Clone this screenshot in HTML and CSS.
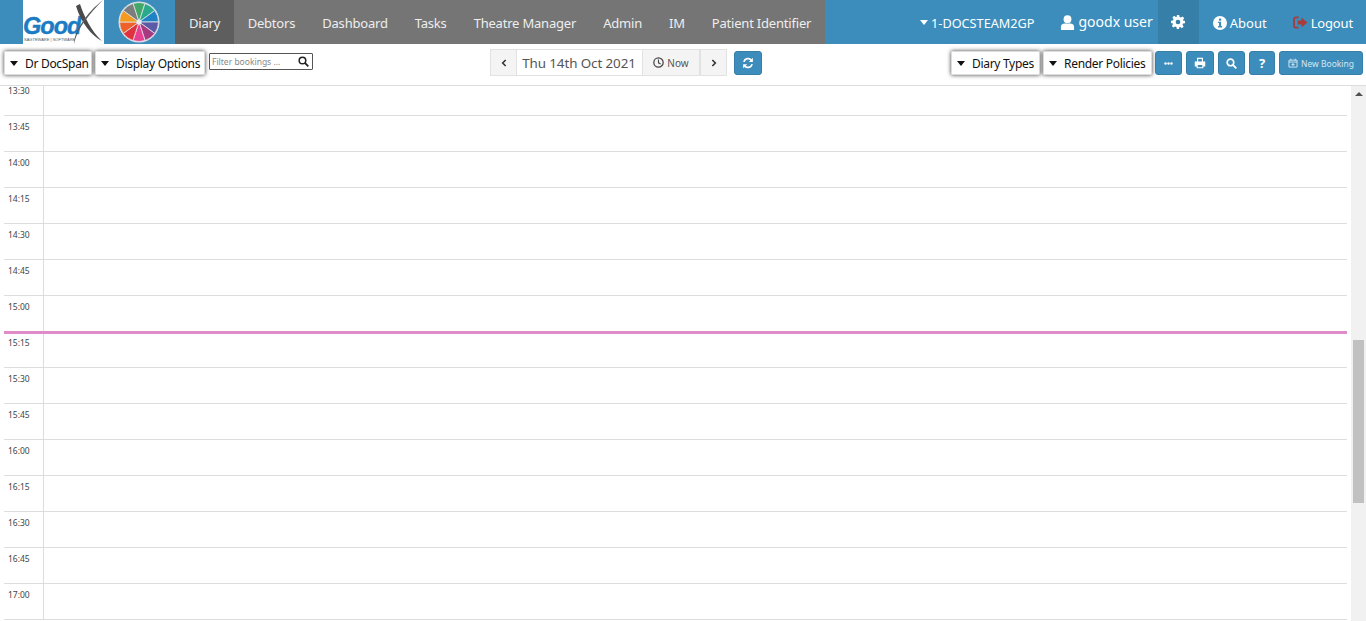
FILE: index.html
```html
<!DOCTYPE html>
<html lang="en">
<head>
<meta charset="utf-8">
<title>GoodX Diary</title>
<link rel="stylesheet" href="styles.css">
</head>
<body>
<header class="topbar">
  <div class="logo">
    <span class="logo-word">Good</span>
    <span class="logo-sub">SAGTEWARE | SOFTWARE</span>
    <svg class="logo-x" viewBox="0 0 36 44" aria-hidden="true">
      <path d="M7 6 L11 4 C15 16 22 31 33 41 C23 36 12 23 7 6 Z" fill="#4a4a4a"/>
      <path d="M34 0 C25 9 15 21 10 30 C8 34 6 39 5 44 C5 32 17 13 34 0 Z" fill="#5a5a5a"/>
    </svg>
  </div>
  <svg class="wheel" viewBox="-21 -21 42 42" aria-hidden="true">
    <circle r="20.500" fill="#dfe6ea"/>
    <g stroke="#dfe6ea" stroke-width=".8">
      <path d="M0 0L-6.030 -18.550A19.500 19.500 0 0 1 6.030 -18.550Z" fill="#43a867"/>
      <path d="M0 0L6.030 -18.550A19.500 19.500 0 0 1 15.780 -11.460Z" fill="#2aa98c"/>
      <path d="M0 0L15.780 -11.460A19.500 19.500 0 0 1 19.500 0Z" fill="#1f82c4"/>
      <path d="M0 0L19.500 0A19.500 19.500 0 0 1 15.780 11.460Z" fill="#5c5aa6"/>
      <path d="M0 0L15.780 11.460A19.500 19.500 0 0 1 6.030 18.550Z" fill="#a63a80"/>
      <path d="M0 0L6.030 18.550A19.500 19.500 0 0 1 -6.030 18.550Z" fill="#e83f93"/>
      <path d="M0 0L-6.030 18.550A19.500 19.500 0 0 1 -15.780 11.460Z" fill="#e0333f"/>
      <path d="M0 0L-15.780 11.460A19.500 19.500 0 0 1 -19.500 0Z" fill="#f0602a"/>
      <path d="M0 0L-19.500 0A19.500 19.500 0 0 1 -15.780 -11.460Z" fill="#f39a1f"/>
      <path d="M0 0L-15.780 -11.460A19.500 19.500 0 0 1 -6.030 -18.550Z" fill="#7d7d7d"/>
    </g>
    <circle r="2.500" fill="#e8ecee"/>
  </svg>
  <nav class="mainnav">
    <a class="navitem navitem-active">Diary</a>
    <a class="navitem">Debtors</a>
    <a class="navitem">Dashboard</a>
    <a class="navitem">Tasks</a>
    <a class="navitem">Theatre Manager</a>
    <a class="navitem">Admin</a>
    <a class="navitem">IM</a>
    <a class="navitem">Patient Identifier</a>
  </nav>
  <div class="usernav">
    <a class="useritem site"><span class="caret caret-white"></span>1-DOCSTEAM2GP</a>
    <a class="useritem user">
      <svg class="ico-user" viewBox="0 0 16 16" aria-hidden="true"><circle cx="8" cy="4.400" r="4.200" fill="#fff"/><path d="M1 16 V12.500 C1 10 3 9 5 9 H11 C13 9 15 10 15 12.500 V16 Z" fill="#fff"/></svg>
      <span class="user-name">goodx user</span>
    </a>
    <a class="gear">
      <svg viewBox="0 0 24 24" width="14" height="14" aria-hidden="true"><path fill="#fff" fill-rule="evenodd" d="M10 0h4l.7 3.400 2.200.9 2.900-1.900 2.800 2.800-1.900 2.900.9 2.200L24 10v4l-3.400.7-.9 2.200 1.900 2.900-2.800 2.800-2.900-1.900-2.200.9L14 24h-4l-.7-3.400-2.200-.9-2.900 1.900-2.800-2.800 1.900-2.900-.9-2.200L0 14v-4l3.400-.7.9-2.200-1.900-2.900 2.800-2.800 2.900 1.900 2.200-.9zM12 8a4 4 0 1 0 0 8 4 4 0 0 0 0-8z"/></svg>
    </a>
    <a class="useritem about">
      <svg viewBox="0 0 16 16" width="14" height="14" aria-hidden="true"><circle cx="8" cy="8" r="8" fill="#fff"/><rect x="6.800" y="2.800" width="2.600" height="2.600" rx=".6" fill="#3c8dbc"/><path d="M5.800 6.600H9.300V11.500H10.400V13H5.800V11.500H6.900V8.100H5.800Z" fill="#3c8dbc"/></svg>
      About
    </a>
    <a class="useritem logout">
      <svg viewBox="0 0 16 14" width="15" height="13" aria-hidden="true"><path d="M6 1.500H3A2 2 0 0 0 1 3.500V10.500A2 2 0 0 0 3 12.500H6" fill="none" stroke="#a83c3c" stroke-width="2"/><path d="M5 4.800H9V1.500L15.500 7 9 12.500V9.200H5Z" fill="#a83c3c"/></svg>
      Logout
    </a>
  </div>
</header>

<section class="toolbar">
  <div class="tool-left">
    <button class="dropbtn btn-doc"><span class="caret"></span>Dr DocSpan</button>
    <button class="dropbtn btn-display"><span class="caret"></span>Display Options</button>
    <div class="filter">
      <span class="filter-text">Filter bookings ...</span>
      <svg viewBox="0 0 16 16" width="11" height="11" aria-hidden="true"><circle cx="6.500" cy="6.500" r="4.800" fill="none" stroke="#222" stroke-width="2.200"/><path d="M10 10L15 15" stroke="#222" stroke-width="2.600"/></svg>
    </div>
  </div>
  <div class="tool-mid">
    <div class="datepick">
      <button class="dp-btn dp-arrow"><svg viewBox="0 0 8 12" width="6" height="8" aria-hidden="true"><path d="M6.500 1.500L2 6l4.500 4.500" fill="none" stroke="#333" stroke-width="2.400"/></svg></button>
      <span class="dp-date">Thu 14th Oct 2021</span>
      <button class="dp-btn dp-now">
        <svg viewBox="0 0 16 16" width="11" height="11" aria-hidden="true"><circle cx="8" cy="8" r="6.800" fill="none" stroke="#444" stroke-width="1.800"/><path d="M8 3.800V8.500L11 10.300" fill="none" stroke="#444" stroke-width="1.600"/></svg>
        Now
      </button>
      <button class="dp-btn dp-arrow"><svg viewBox="0 0 8 12" width="6" height="8" aria-hidden="true"><path d="M1.500 1.500L6 6l-4.500 4.500" fill="none" stroke="#333" stroke-width="2.400"/></svg></button>
    </div>
    <button class="bluebtn refresh">
      <svg viewBox="0 0 16 16" width="12" height="12" aria-hidden="true"><path d="M2.500 6.500A5.700 5.700 0 0 1 12.500 4.200" fill="none" stroke="#fff" stroke-width="2.300"/><path d="M14.500 1V6.500H9Z" fill="#fff"/><path d="M13.500 9.500A5.700 5.700 0 0 1 3.500 11.800" fill="none" stroke="#fff" stroke-width="2.300"/><path d="M1.500 15V9.500H7Z" fill="#fff"/></svg>
    </button>
  </div>
  <div class="tool-right">
    <button class="dropbtn btn-types"><span class="caret"></span>Diary Types</button>
    <button class="dropbtn btn-render"><span class="caret"></span>Render Policies</button>
    <button class="bluebtn btn-more"><svg viewBox="0 0 12 4" width="9" height="3" aria-hidden="true"><circle cx="2" cy="2" r="1.600" fill="#fff"/><circle cx="6" cy="2" r="1.600" fill="#fff"/><circle cx="10" cy="2" r="1.600" fill="#fff"/></svg></button>
    <button class="bluebtn btn-print"><svg viewBox="0 0 16 16" width="12" height="12" aria-hidden="true"><path fill="#fff" fill-rule="evenodd" d="M4 1H12V6H15V12.500H12.500V15H3.500V12.500H1V6H4ZM5.500 2.500V6H10.500V2.500ZM5 10.500V13.500H11V10.500Z"/></svg></button>
    <button class="bluebtn btn-search"><svg viewBox="0 0 16 16" width="11" height="11" aria-hidden="true"><circle cx="6.500" cy="6.500" r="4.800" fill="none" stroke="#fff" stroke-width="2.400"/><path d="M10 10L15 15" stroke="#fff" stroke-width="2.800"/></svg></button>
    <button class="bluebtn btn-help">?</button>
    <button class="bluebtn btn-new">
      <svg viewBox="0 0 16 16" width="10" height="10" aria-hidden="true"><path fill="none" stroke="#d5e6f1" stroke-width="1.500" d="M1.500 3.500H14.500V14.500H1.500ZM1.500 6.500H14.500M4.500 1V4M11.500 1V4M8 8V13M5.500 10.500H10.500"/></svg>
      New Booking
    </button>
  </div>
</section>

<main class="diary">
  <div class="grid">
    <div class="row row-first"><span class="time">13:30</span><span class="slot"></span></div>
    <div class="row"><span class="time">13:45</span><span class="slot"></span></div>
    <div class="row"><span class="time">14:00</span><span class="slot"></span></div>
    <div class="row"><span class="time">14:15</span><span class="slot"></span></div>
    <div class="row"><span class="time">14:30</span><span class="slot"></span></div>
    <div class="row"><span class="time">14:45</span><span class="slot"></span></div>
    <div class="row row-now"><span class="time">15:00</span><span class="slot"></span></div>
    <div class="row"><span class="time">15:15</span><span class="slot"></span></div>
    <div class="row"><span class="time">15:30</span><span class="slot"></span></div>
    <div class="row"><span class="time">15:45</span><span class="slot"></span></div>
    <div class="row"><span class="time">16:00</span><span class="slot"></span></div>
    <div class="row"><span class="time">16:15</span><span class="slot"></span></div>
    <div class="row"><span class="time">16:30</span><span class="slot"></span></div>
    <div class="row"><span class="time">16:45</span><span class="slot"></span></div>
    <div class="row"><span class="time">17:00</span><span class="slot"></span></div>
  </div>
  <div class="scrollbar">
    <span class="scroll-up"></span>
    <span class="scroll-thumb"></span>
  </div>
</main>
</body>
</html>
```

FILE: styles.css
```css
* { box-sizing: border-box; }
html, body { height: 100%; }
body {
  margin: 0;
  overflow: hidden;
  font-family: "Noto Sans", "Open Sans", sans-serif;
  color: #222;
  background: #fff;
  display: flex;
  flex-direction: column;
}
button { font-family: inherit; cursor: pointer; }

/* top bar */
.topbar {
  height: 44px;
  flex: none;
  display: flex;
  background: #3c8dbc;
  padding-left: 23px;
}
.logo {
  position: relative;
  width: 81px;
  height: 44px;
  background: #fff;
  overflow: hidden;
}
.logo-word {
  position: absolute;
  left: 0;
  top: 15px;
  font: italic 700 23.500px/22px "Liberation Sans", sans-serif;
  color: #1b7cc4;
  letter-spacing: -1px;
  -webkit-text-stroke: .4px #1b7cc4;
}
.logo-sub {
  position: absolute;
  left: 1px;
  top: 38px;
  font: 4px/4px "Liberation Sans", sans-serif;
  color: #555;
  white-space: nowrap;
}
.logo-x { position: absolute; left: 46px; top: 0; width: 36px; height: 44px; }
.wheel { width: 42px; height: 42px; margin: 1px 15px 0 14px; flex: none; }
.mainnav { display: flex; background: #757575; height: 44px; }
.navitem {
  display: flex;
  align-items: center;
  padding: 1px 13.500px 0;
  font-size: 13px;
  letter-spacing: -.2px;
  color: #eee;
  white-space: nowrap;
}
.navitem-active { background: #5e5e5e; padding: 1px 14px 0; }
.usernav { margin-left: auto; display: flex; align-items: center; height: 44px; color: #fff; }
.useritem { display: flex; align-items: center; gap: 3px; padding-top: 1px; color: #fff; font-size: 13px; white-space: nowrap; }
.site { font-size: 12.700px; margin-right: 26px; gap: 0; }
.user { margin-right: 5px; }
.user-name { font-size: 14px; margin-top: -2px; }
.ico-user { width: 15px; height: 15px; }
.gear { width: 41px; height: 44px; background: #367fa9; display: flex; align-items: center; justify-content: center; }
.about { margin: 0 26px 0 14px; }
.logout { margin-right: 13px; letter-spacing: -.15px; }
.caret {
  display: inline-block;
  width: 0;
  height: 0;
  border-left: 4px solid transparent;
  border-right: 4px solid transparent;
  border-top: 5px solid #111;
  margin-right: 7px;
}
.caret-white { border-left-width: 4.500px; border-right-width: 4.500px; border-top-color: #fff; margin-right: 3px; }

/* toolbar */
.toolbar {
  position: relative;
  height: 42px;
  flex: none;
  display: flex;
  align-items: flex-start;
  border-bottom: 1px solid #ddd;
  padding: 7px 3px 0 4px;
}
.tool-left { display: flex; align-items: flex-start; gap: 3px; }
.tool-mid { display: flex; gap: 7px; margin-left: 177px; }
.tool-right { display: flex; gap: 3px; margin-left: auto; }
.dropbtn {
  height: 24px;
  padding: 0 4px 0 5px;
  background: #fff;
  border: 1px solid #ddd;
  border-radius: 1px;
  box-shadow: 0 0 4px rgba(0,0,0,.75);
  font-size: 12px;
  letter-spacing: -.3px;
  color: #111;
  display: flex;
  align-items: center;
  white-space: nowrap;
}
.btn-doc { width: 88px; }
.btn-display { width: 110px; }
.btn-types { width: 89px; }
.btn-render { width: 109px; }
.filter {
  width: 104px;
  height: 17px;
  margin: 2px 0 0 1px;
  border: 1px solid #555;
  border-radius: 1px;
  background: #fff;
  display: flex;
  align-items: center;
  justify-content: space-between;
  padding: 0 3px 0 2px;
}
.filter-text { font-size: 8.500px; color: #888; white-space: nowrap; }
.datepick { display: flex; height: 27px; margin-top: -2px; }
.dp-btn {
  border: 1px solid #e2e2e2;
  background: #f4f4f4;
  display: flex;
  align-items: center;
  justify-content: center;
  padding: 0;
  color: #555;
}
.dp-arrow { width: 27px; }
.dp-now { width: 58px; gap: 3px; font-size: 10px; }
.dp-date {
  width: 125px;
  padding-right: 1px;
  border: 1px solid #e2e2e2;
  border-width: 1px 0;
  font-size: 13.400px;
  letter-spacing: -.1px;
  line-height: 26px;
  text-align: center;
  color: #555;
  white-space: nowrap;
}
.bluebtn {
  height: 24px;
  background: #3c8dbc;
  border: 1px solid #367fa9;
  border-radius: 3px;
  color: #fff;
  display: flex;
  align-items: center;
  justify-content: center;
  padding: 0;
}
.refresh { width: 28px; height: 24px; }
.btn-more { width: 27px; }
.btn-print { width: 28px; margin-left: 1px; }
.btn-search { width: 27px; margin-left: 1px; }
.btn-help { width: 26px; margin-left: 1px; font-size: 13px; font-weight: 700; }
.btn-new { width: 84px; gap: 3px; font-size: 8.500px; color: #d5e6f1; margin-left: 1px; }

/* diary */
.diary { flex: 1; min-height: 0; display: flex; overflow: hidden; }
.grid { width: 1343px; margin-left: 4px; flex: none; }
.row { height: 36px; display: flex; border-bottom: 1px solid #ddd; }
.row-first { height: 30px; }
.row-first .time { margin-top: -1px; }
.row-now {
  position: relative;
  z-index: 1;
  height: 38px;
  margin-bottom: -2px;
  border-bottom: 3px solid #df8cc8;
}
.time {
  width: 39px;
  flex: none;
  font-size: 8.500px;
  line-height: 12px;
  padding: 0 0 0 4px;
  margin-top: 5px;
  color: #444;
}
.slot { flex: 1; border-left: 1px solid #ddd; }
.scrollbar {
  width: 15px;
  margin-left: auto;
  background: #f1f1f1;
  display: flex;
  flex-direction: column;
  align-items: center;
  padding-top: 6px;
}
.scroll-up {
  width: 0;
  height: 0;
  border-left: 4px solid transparent;
  border-right: 4px solid transparent;
  border-bottom: 4px solid #505050;
}
.scroll-thumb { width: 11px; height: 163px; margin-top: 244px; background: #c1c1c1; }
```
